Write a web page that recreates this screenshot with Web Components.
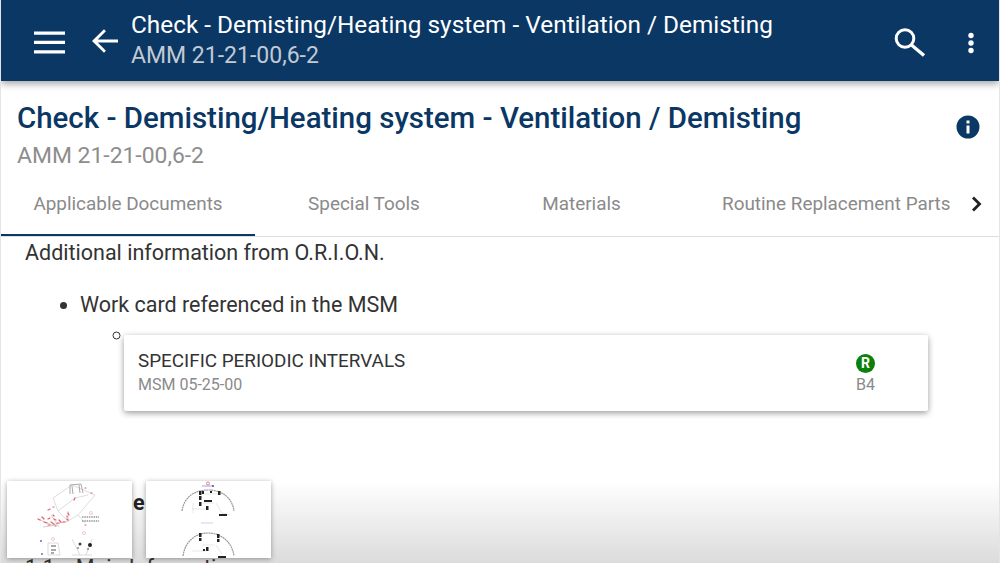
<!DOCTYPE html>
<html>
<head>
<meta charset="utf-8">
<title>Check - Demisting/Heating system</title>
<style>
  html, body { margin: 0; height: 100%; overflow: hidden; background: #fff; }
  body { font-family: Roboto, "Liberation Sans", sans-serif; color: #333; }
  #page { height: 563px; display: flex; flex-direction: column; overflow: hidden; border-left: 1px solid #e4e4e4; border-right: 1px solid #e4e4e4; position: relative; }
</style>
</head>
<body>
<div id="page">
  <app-bar title-text="Check - Demisting/Heating system - Ventilation / Demisting" sub-text="AMM 21-21-00,6-2"></app-bar>
  <doc-title title-text="Check - Demisting/Heating system - Ventilation / Demisting" sub-text="AMM 21-21-00,6-2"></doc-title>
  <tab-bar></tab-bar>
  <fade-shade></fade-shade>
  <doc-content></doc-content>
  <thumb-strip></thumb-strip>
</div>

<script>
class AppBar extends HTMLElement {
    constructor() {
        super();
        this.attachShadow({ mode: "open" });
        this.shadowRoot.innerHTML = `
            <style>
                :host { display: flex; align-items: center; flex: none; height: 81px; background: #0a3764; color: #fff; box-shadow: 0 3px 7px rgba(0,0,0,.35); position: relative; z-index: 2; }
                svg { display: block; fill: #fff; flex: none; }
                .menu { margin-left: 30px; }
                .back { margin-left: 22px; }
                .titles { margin-left: 12px; flex: 1; min-width: 0; align-self: flex-start; margin-top: 10px; }
                .t { font-size: 24.37px; line-height: 30px; white-space: nowrap; }
                .s { font-size: 23px; line-height: 31px; color: #c3cad3; white-space: nowrap; }
                .search { margin-right: 35px; }
                .more { margin-right: 19px; }
            </style>
            <svg class="menu" width="38" height="38" viewBox="0 0 38 38"><path d="M3 9.500h31v3.300h-31zM3 18.700h31v3.300h-31zM3 28.300h31v3.300h-31z"/></svg>
            <svg class="back" width="28" height="28" viewBox="0 0 28 28"><path d="M27 12.500H6.700l8.200-8.300L13 2.300 1 14l12 11.700 1.900-1.900-8.200-8.300H27z"/></svg>
            <div class="titles">
                <div class="t">${this.getAttribute("title-text")}</div>
                <div class="s">${this.getAttribute("sub-text")}</div>
            </div>
            <svg class="search" width="34" height="34" viewBox="0 0 34 34" style="fill:none;stroke:#fff"><circle cx="12" cy="14.500" r="8.800" stroke-width="3"/><path d="M18.500 21l12.500 10.500" stroke-width="3.400"/></svg>
            <svg class="more" width="18" height="26" viewBox="0 0 18 26"><circle cx="9" cy="7.500" r="2.700"/><circle cx="9" cy="15" r="2.700"/><circle cx="9" cy="22.500" r="2.700"/></svg>
        `;
    }
}
customElements.define("app-bar", AppBar);

class DocTitle extends HTMLElement {
    constructor() {
        super();
        this.attachShadow({ mode: "open" });
        this.shadowRoot.innerHTML = `
            <style>
                :host { display: flex; flex: none; height: 92px; padding: 18px 19px 0 16px; box-sizing: border-box; justify-content: space-between; }
                .t { font-size: 29.46px; line-height: 38px; font-weight: 500; color: #0a3764; white-space: nowrap; }
                .s { font-size: 22.9px; line-height: 36px; color: #8d8d8d; margin-top: 1px; }
                svg { display: block; fill: #0a3764; margin-top: 16px; }
            </style>
            <div>
                <div class="t">${this.getAttribute("title-text")}</div>
                <div class="s">${this.getAttribute("sub-text")}</div>
            </div>
            <svg width="24" height="24" viewBox="0 0 24 24"><path fill-rule="evenodd" d="M12 .5a11.500 11.500 0 1 0 0 23 11.500 11.500 0 0 0 0-23zM10.500 5.500h3v3h-3zM10.500 10.500h3v8h-3z"/></svg>
        `;
    }
}
customElements.define("doc-title", DocTitle);

class TabBar extends HTMLElement {
    constructor() {
        super();
        this.attachShadow({ mode: "open" });
        this.shadowRoot.innerHTML = `
            <style>
                :host { display: grid; grid-template-columns: 254px 218px 217px 1fr 38px; flex: none; height: 64px; box-sizing: border-box; border-bottom: 1px solid #dedede; font-size: 18.9px; color: #8a8a8a; }
                div { display: flex; align-items: center; justify-content: center; white-space: nowrap; padding-bottom: 2px; overflow: hidden; }
                .active { box-shadow: inset 0 -2px 0 #0a3764; }
                .long { justify-content: flex-start; padding-left: 32px; }
                .next { padding-right: 6px; }
                svg { display: block; fill: #222; }
            </style>
            <div class="active">Applicable Documents</div>
            <div>Special Tools</div>
            <div>Materials</div>
            <div class="long">Routine Replacement Parts</div>
            <div class="next"><svg width="22" height="22" viewBox="0 0 22 22"><path d="M8 3.500L6 5.500l5.500 5.500L6 16.500l2 2L15.500 11z"/></svg></div>
        `;
    }
}
customElements.define("tab-bar", TabBar);

class WorkCard extends HTMLElement {
    constructor() {
        super();
        this.attachShadow({ mode: "open" });
        this.shadowRoot.innerHTML = `
            <style>
                :host { display: flex; justify-content: space-between; width: 804px; height: 76px; box-sizing: border-box; padding: 14px 53px 0 14px; background: #fff; box-shadow: 0 2px 6px rgba(0,0,0,.4); border-radius: 2px; }
                .t { font-size: 18.86px; line-height: 24px; color: #333; }
                .s { font-size: 16px; line-height: 22px; color: #8a8a8a; margin-top: 1px; }
                .r { display: flex; flex-direction: column; align-items: center; margin-top: 5px; }
                .badge { width: 19px; height: 19px; border-radius: 50%; background: #0b800b; color: #fff; font-size: 14px; font-weight: 700; line-height: 19px; text-align: center; }
                .b { font-size: 16px; line-height: 22px; color: #8a8a8a; margin-top: 1px; }
            </style>
            <div>
                <div class="t"><slot name="title"></slot></div>
                <div class="s"><slot name="ref"></slot></div>
            </div>
            <div class="r">
                <div class="badge">R</div>
                <div class="b"><slot name="zone"></slot></div>
            </div>
        `;
    }
}
customElements.define("work-card", WorkCard);

class DocContent extends HTMLElement {
    constructor() {
        super();
        this.attachShadow({ mode: "open" });
        this.shadowRoot.innerHTML = `
            <style>
                :host { display: block; position: relative; padding: 1px 0 0 24px; font-size: 21.5px; color: #333; }
                p { margin: 0; line-height: 30px; }
                ul { margin: 22px 0 0; padding: 0 0 0 55px; list-style: disc; }
                li { line-height: 30px; }
                ul ul { margin: 0; padding: 0 0 0 53px; list-style: circle; }
                work-card { margin: -15px 0 0 -9px; }
                .head { font-weight: 700; color: #222; margin: 77px 0 0 108px; }
                .sub { margin-top: 35px; display: flex; gap: 21px; }
            </style>
            <p>Additional information from O.R.I.O.N.</p>
            <ul>
                <li>Work card referenced in the MSM
                    <ul>
                        <li>&nbsp;<work-card>
                            <span slot="title">SPECIFIC PERIODIC INTERVALS</span>
                            <span slot="ref">MSM 05-25-00</span>
                            <span slot="zone">B4</span>
                        </work-card></li>
                    </ul>
                </li>
            </ul>
            <p class="head">e</p>
            <p class="sub"><span>1.1</span><span>Main Information</span></p>
        `;
    }
}
customElements.define("doc-content", DocContent);

class FadeShade extends HTMLElement {
    constructor() {
        super();
        this.attachShadow({ mode: "open" });
        this.shadowRoot.innerHTML = `
            <style>
                :host { display: block; position: absolute; left: 0; right: 0; bottom: 0; height: 82px; background: linear-gradient(rgba(200,200,200,0), rgba(200,200,200,.65)); }
            </style>
        `;
    }
}
customElements.define("fade-shade", FadeShade);

class ThumbStrip extends HTMLElement {
    constructor() {
        super();
        this.attachShadow({ mode: "open" });
        const grey = "#cfcfcf", red = "#e2606a";
        this.shadowRoot.innerHTML = `
            <style>
                :host { display: flex; align-items: flex-start; gap: 14px; position: absolute; left: 0; right: 0; bottom: 0; height: 82px; padding-left: 6px; box-sizing: border-box; }
                .sheet { background: #fff; box-shadow: 0 1px 5px rgba(0,0,0,.35); flex: none; width: 125px; height: 77px; }
                svg { display: block; filter: blur(.4px); }
            </style>
            <div class="sheet"><svg width="125" height="77" viewBox="0 0 125 77" fill="none" stroke="${grey}" stroke-width=".7">
                <path d="M46 17L65 4l23 10-17 20-10 6-10-10zM68 17l13-3M51 30l17-13M71 34l7 8"/>
                <path d="M63 13V4l11-1 2 9M65 5l1 8M72 4l1 8" stroke="#a8a8a8" stroke-width="1"/>
                <path d="M31 38l14 6 16-4M36 46l14-2M44 34l8 12M61 30v10" stroke="#c8a8a8" stroke-width=".6"/>
                <g stroke="${red}" stroke-width="1.200" stroke-linecap="round">
                    <path d="M31 38l2 1M35 36l2 2M37 41l3 1M41 38l2-1M44 41l3 2M47 38l2 1M50 42l2 0M52 39l2 2M56 41l2 0M60 38l1 1M41 44l2 0M48 45l1 0M46 34l1 1M61 32l1 2M60 35l0 1M41 29l2-1M46 26l1 0M67 19l1-2M84 12l1 0M78 7l1 0M78 44l1 0"/>
                </g>
                <path d="M75 36h17M75 40h17" stroke="#666" stroke-width="1.100" stroke-dasharray="1.500 .8"/>
                <circle cx="84" cy="32" r="1.500" stroke="#eeb0b0"/><circle cx="77" cy="52" r="1.500" stroke="#eeb0b0"/><circle cx="46" cy="58" r="1.500" stroke="#eeb0b0"/>
                <path d="M41 62h10l2 12H41zM65 58l8 16M85 58l-6 16M65 74h20" stroke="#cccccc"/>
                <path d="M44 65h5M44 69h5M44 72h3M70 67h2M80 68h2" stroke="#555" stroke-width="1.100"/>
                <circle cx="73" cy="63" r="1.500" fill="#444" stroke="none"/><circle cx="83" cy="64" r="2" fill="#222" stroke="none"/>
                <circle cx="34" cy="60" r="1" fill="#6a6ad0" stroke="none"/><circle cx="35" cy="73" r="1" fill="#6a6ad0" stroke="none"/>
            </svg></div>
            <div class="sheet"><svg width="125" height="77" viewBox="0 0 125 77" fill="none" stroke="#999" stroke-width=".8">
                <circle cx="62" cy="2.500" r="1.500" stroke="${red}"/><path d="M56 5h11" stroke="#8a8ad8"/><circle cx="67" cy="5" r="1" fill="#4a4ac8" stroke="none"/>
                <path d="M36 30C38 15 50 9 62 9s24 6 26 21" stroke-width="1.200" stroke-dasharray="2 .5"/>
                <path d="M58 13h14M56 22h12M46 28h14M70 22l6 10 8 2M47 22v10" stroke="#d6d6d6" stroke-width=".6"/>
                <path d="M53 10h2.500v4H53zM56 10h2v3h-2zM53 15h2.500v4H53zM53 21h2.500v4H53zM72 10h2.500v4H72zM58 19h8v2h-8zM60 25h2.500v4H60zM64 10h2v2h-2zM73 33h8v2h-8z" fill="#222" stroke="none"/>
                <path d="M55 42h12" stroke="#c0c0e8"/>
                <path d="M37 75C39 60 50 52 62 52s24 8 26 23" stroke-width="1.200" stroke-dasharray="2 .5"/>
                <path d="M56 64h12M46 70h14M70 64l6 9" stroke="#d6d6d6" stroke-width=".6"/>
                <path d="M53 52h2.500v4H53zM53 57h2.500v3H53zM71 53h2.500v4H71zM71 58h2.500v3H71zM60 66h2.500v4H60zM57 68h2v2h-2zM72 75h8v2h-8z" fill="#222" stroke="none"/>
            </svg></div>
        `;
    }
}
customElements.define("thumb-strip", ThumbStrip);
</script>
</body>
</html>
